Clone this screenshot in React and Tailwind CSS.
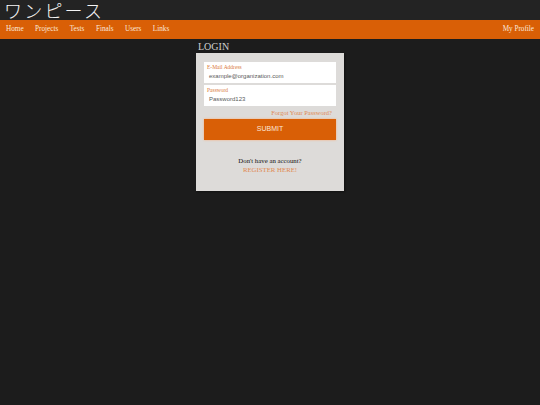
import React from 'react';

const serif = { fontFamily: '"Liberation Serif", "Times New Roman", serif' };

export default function App() {
  const links = ['Home', 'Projects', 'Tests', 'Finals', 'Users', 'Links'];

  return (
    <div className="min-h-[405px] w-full bg-[#1c1c1c]">
      {/* title */}
      <header className="h-[20px] bg-[#232323] px-[4px]">
        <h1 className="text-[18px] leading-[20px] font-light text-[#f4f4f4] tracking-[2.2px] font-['Noto_Sans_CJK_JP',sans-serif]">
          ワンピース
        </h1>
      </header>

      {/* nav */}
      <nav className="flex h-[19px] items-center justify-between bg-[#d95f06] px-[6px] text-[7.2px] text-[#fbe9dc]" style={serif}>
        <ul className="flex gap-[11.5px]">
          {links.map((l) => (
            <li key={l}>{l}</li>
          ))}
        </ul>
        <span>My Profile</span>
      </nav>

      {/* login */}
      <main className="flex justify-center pt-[2px]">
        <div className="w-[148px]">
          <h2 className="px-[2px] text-[10px] leading-[12px] text-[#d0d0d0]" style={serif}>LOGIN</h2>
          <div className="bg-[#dddbd9] px-[8px] pt-[9px] pb-[17px] shadow-[1px_1px_2px_rgba(0,0,0,0.4)]">
            <div className="flex flex-col gap-[2px]">
              <label className="block h-[21px] bg-white px-[3px] pt-[2px]">
                <span className="block text-[5.5px] leading-[7px] text-[#d9773a]" style={serif}>E-Mail Address</span>
                <span className="block pl-[2px] text-[6px] leading-[10px] text-[#5a5a5a] font-['Liberation_Sans',sans-serif]">example@organization.com</span>
              </label>
              <label className="block h-[21px] bg-white px-[3px] pt-[2px]">
                <span className="block text-[5.5px] leading-[7px] text-[#d9773a]" style={serif}>Password</span>
                <span className="block pl-[2px] text-[6px] leading-[10px] text-[#5a5a5a] font-['Liberation_Sans',sans-serif]">Password123</span>
              </label>
            </div>
            <p className="mt-[3px] pr-[4px] text-right text-[6.5px] leading-[8px] text-[#e08a52]" style={serif}>
              Forgot Your Password?
            </p>
            <button className="mt-[2px] block h-[21px] w-full bg-[#d95f06] text-[7px] text-[#fbe6d6] shadow-[0_0_2px_rgba(255,170,110,0.9)] font-['Liberation_Sans',sans-serif]">
              SUBMIT
            </button>
            <div className="mt-[16px] text-center text-[6.8px] leading-[9px]" style={serif}>
              <p className="text-[#111]">Don't have an account?</p>
              <p className="text-[#e08a52]">REGISTER HERE!</p>
            </div>
          </div>
        </div>
      </main>
    </div>
  );
}
